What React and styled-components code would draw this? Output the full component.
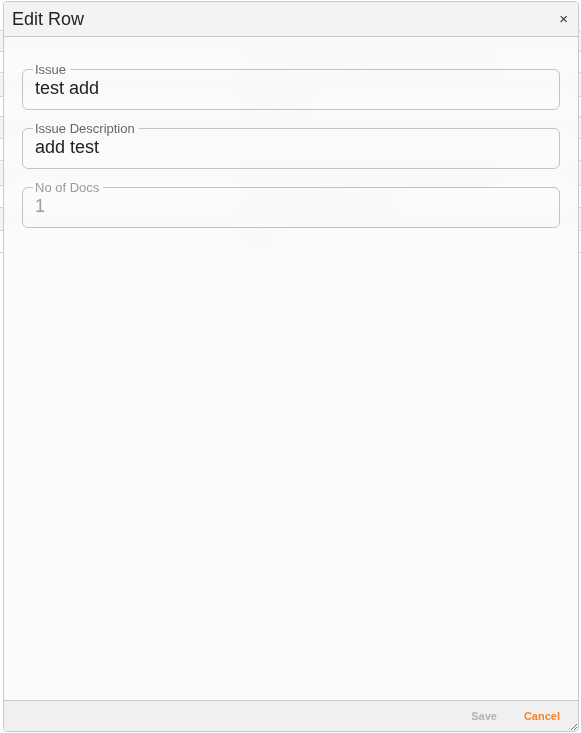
import React from "react";
import styled, { createGlobalStyle } from "styled-components";

const Global = createGlobalStyle`
  html, body { margin: 0; padding: 0; }
  body {
    font-family: "Liberation Sans", Arial, sans-serif;
    background: #ffffff;
    width: 581px;
    height: 733px;
    overflow: hidden;
  }
`;

const Page = styled.div`
  position: relative;
  width: 581px;
  height: 733px;
  overflow: hidden;
  background: #fff;
`;

const BgTable = styled.div`
  display: flex;
  flex-direction: column;
`;

const BgRow = styled.div`
  display: flex;
  align-items: center;
  box-sizing: border-box;
  height: ${(p) => p.$h}px;
  border-bottom: 1px solid #d6d6d6;
  background: ${(p) => (p.$alt ? "#f4f4f4" : "#fff")};
  padding-left: 248px;
  font-size: 12px;
  color: #8a8a8a;
  white-space: nowrap;
`;

const Dialog = styled.div`
  position: absolute;
  top: 1px;
  left: 3px;
  width: 576px;
  height: 731px;
  box-sizing: border-box;
  border: 1px solid #c9c9c9;
  border-radius: 4px;
  display: flex;
  flex-direction: column;
  overflow: hidden;
  background: rgba(251, 251, 251, 0.9);
  backdrop-filter: blur(9px);
`;

const Header = styled.div`
  height: 34px;
  flex: none;
  display: flex;
  align-items: center;
  justify-content: space-between;
  padding: 0 10px 0 8px;
  background: #f3f3f3;
  border-bottom: 1px solid #c8c8c8;
`;

const Title = styled.div`
  font-size: 18px;
  color: #222;
  line-height: 1;
`;

const Close = styled.button`
  border: 0;
  background: none;
  padding: 0;
  font-family: "Liberation Sans", Arial, sans-serif;
  font-size: 15px;
  line-height: 1;
  color: #333;
  cursor: pointer;
  margin-bottom: 2px;
`;

const Body = styled.div`
  flex: 1;
  display: flex;
  flex-direction: column;
  gap: 11px;
  padding: 25px 18px 0 18px;
`;

const Field = styled.fieldset`
  margin: 0;
  padding: 0 12px 8px 12px;
  border: 1px solid #c4c4c4;
  border-radius: 6px;
  min-width: 0;
`;

const Legend = styled.legend`
  font-size: 13px;
  line-height: 15px;
  color: ${(p) => (p.$disabled ? "#9a9a9a" : "#666")};
  padding: 0 4px 0 2px;
  margin-left: -2px;
`;

const Value = styled.div`
  font-size: 18px;
  line-height: 22px;
  height: 24px;
  color: ${(p) => (p.$disabled ? "#9d9d9d" : "#222")};
`;

const Footer = styled.div`
  height: 30px;
  flex: none;
  display: flex;
  justify-content: flex-end;
  align-items: center;
  gap: 27px;
  padding-right: 18px;
  background: #f0f0f0;
  border-top: 1px solid #c8c8c8;
  position: relative;
`;

const ActionButton = styled.button`
  border: 0;
  background: none;
  padding: 0;
  font-family: "Liberation Sans", Arial, sans-serif;
  font-weight: bold;
  font-size: 11px;
  color: ${(p) => (p.$primary ? "#f7842a" : "#b3b3b3")};
  cursor: pointer;
`;

const Grip = styled.svg`
  position: absolute;
  right: 0;
  bottom: 0;
`;

const bgRows = [
  { h: 31, t: "" },
  { h: 21, t: "Lorem ipsum dolor sit amet" },
  { h: 21, t: "Sed ut perspiciatis unde omnis iste natus error" },
  { h: 24, t: "Nemo" },
  { h: 20, t: "Quis autem" },
  { h: 22, t: "" },
  { h: 22, t: "" },
  { h: 25, t: "Neque porro quisquam est qui dolorem ipsum" },
  { h: 22, t: "Ut enim ad minima veniam" },
  { h: 23, t: "Nam" },
  { h: 22, t: "Nihil" },
];

export default function App() {
  return (
    <Page>
      <Global />
      <BgTable>
        {bgRows.map((r, i) => (
          <BgRow key={i} $h={r.h} $alt={i % 2 === 1}>
            {r.t}
          </BgRow>
        ))}
      </BgTable>
      <Dialog>
        <Header>
          <Title>Edit Row</Title>
          <Close aria-label="Close">×</Close>
        </Header>
        <Body>
          <Field>
            <Legend>Issue</Legend>
            <Value>test add</Value>
          </Field>
          <Field>
            <Legend>Issue Description</Legend>
            <Value>add test</Value>
          </Field>
          <Field disabled>
            <Legend $disabled>No of Docs</Legend>
            <Value $disabled>1</Value>
          </Field>
        </Body>
        <Footer>
          <ActionButton>Save</ActionButton>
          <ActionButton $primary>Cancel</ActionButton>
          <Grip width="9" height="9" viewBox="0 0 9 9">
            <path d="M8 2 L2 8 M8 5 L5 8" stroke="#777" strokeWidth="1" />
          </Grip>
        </Footer>
      </Dialog>
    </Page>
  );
}
